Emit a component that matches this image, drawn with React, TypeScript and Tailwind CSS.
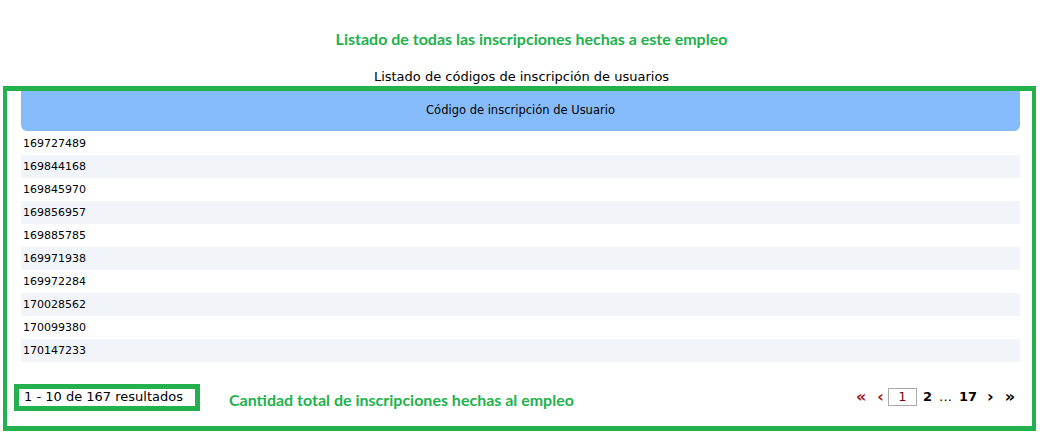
const codes = [
  "169727489",
  "169844168",
  "169845970",
  "169856957",
  "169885785",
  "169971938",
  "169972284",
  "170028562",
  "170099380",
  "170147233",
];

export default function App() {
  return (
    <div className="w-[1043px] h-[434px] bg-white font-['DejaVu_Sans',sans-serif] text-black overflow-hidden">
      {/* Titles */}
      <div className="pt-[30px] text-center">
        <h1 className="pl-[20px] font-['Lato',sans-serif] font-bold text-[16px] leading-[18px] text-[#22b14c]">
          Listado de todas las inscripciones hechas a este empleo
        </h1>
        <p className="mt-[21px] text-[13px] leading-[16px]">Listado de códigos de inscripción de usuarios</p>
      </div>

      {/* Table box */}
      <div className="mt-[1px] ml-[3px] w-[1033px] border-x-4 border-y-[5px] border-[#22b14c] pl-[14px] pr-[12px]">
        <div className="h-[40px] bg-[#86bcfb] rounded-b-[6px] flex items-center justify-center text-[11.5px]">
          Código de inscripción de Usuario
        </div>
        <div className="mt-[1px]">
          {codes.map((c, i) => (
            <div
              key={c}
              className={`h-[23px] flex items-center pt-[2px] px-[2px] text-[11px] ${i % 2 === 1 ? "bg-[#f1f4f9]" : "bg-white"}`}
            >
              {c}
            </div>
          ))}
        </div>

        {/* Footer */}
        <div className="mt-[20px] mb-[14px] -ml-[7px] pr-[5px] flex items-center">
          <div className="w-[186px] h-[27px] border-[5px] border-[#22b14c] flex items-center pl-[5px] text-[13px]">
            1 - 10 de 167 resultados
          </div>
          <div className="ml-[29px] mt-[6px] font-['Lato',sans-serif] font-bold text-[16px] text-[#22b14c]">
            Cantidad total de inscripciones hechas al empleo
          </div>
          <div className="ml-auto flex items-center font-bold text-[13px]">
            <span className="text-[16px] leading-none text-[#9b1b1b]">«</span>
            <span className="ml-[11px] text-[16px] leading-none text-[#9b1b1b]">‹</span>
            <span className="ml-[4px] w-[29px] h-[18px] border border-[#aaaaaa] flex items-center justify-center font-normal text-[#7a0a0a]">
              1
            </span>
            <span className="ml-[6px]">2</span>
            <span className="ml-[7px] font-normal">…</span>
            <span className="ml-[7px]">17</span>
            <span className="ml-[10px] text-[16px] leading-none">›</span>
            <span className="ml-[11px] text-[16px] leading-none">»</span>
          </div>
        </div>
      </div>
    </div>
  );
}
